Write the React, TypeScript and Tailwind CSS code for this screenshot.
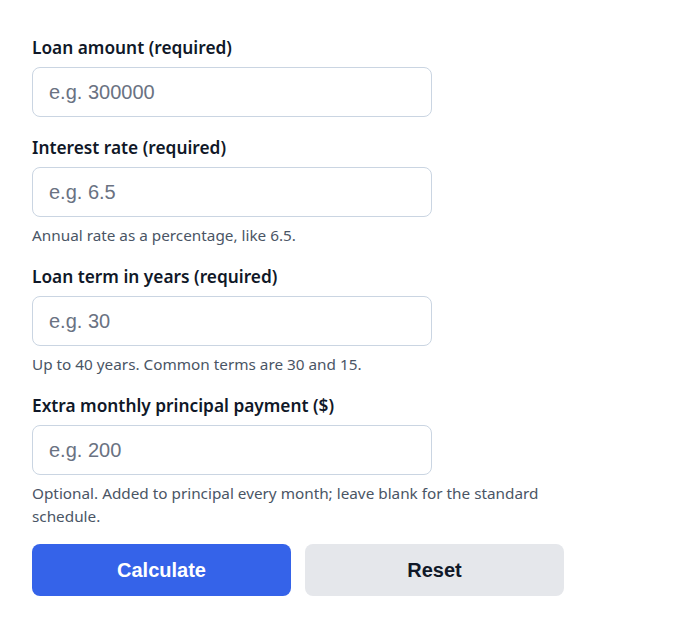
const fields = [
  { label: "Loan amount (required)", placeholder: "e.g. 300000", hint: "" },
  { label: "Interest rate (required)", placeholder: "e.g. 6.5", hint: "Annual rate as a percentage, like 6.5." },
  { label: "Loan term in years (required)", placeholder: "e.g. 30", hint: "Up to 40 years. Common terms are 30 and 15." },
  {
    label: "Extra monthly principal payment ($)",
    placeholder: "e.g. 200",
    hint: "Optional. Added to principal every month; leave blank for the standard schedule.",
  },
];

export default function App() {
  return (
    <div className="min-h-screen bg-white px-8 pt-[35px] font-['Noto_Sans',sans-serif]">
      <form className="flex w-[532px] flex-col" onSubmit={(e) => e.preventDefault()}>
        {fields.map((f, i) => (
          <div key={i} className="mb-[18px] flex flex-col">
            <label className="mb-[7px] text-[17.3px] font-semibold leading-[25px] text-gray-900">{f.label}</label>
            <input
              type="text"
              placeholder={f.placeholder}
              className="h-[50px] w-[400px] rounded-lg border border-slate-300 px-4 font-['Liberation_Sans',sans-serif] text-[20px] text-gray-900 placeholder:text-gray-500 focus:outline-none"
            />
            {f.hint && <p className="mt-[7px] -mb-px text-[15.3px] leading-[23px] text-gray-600">{f.hint}</p>}
          </div>
        ))}
        <div className="-mt-px flex gap-[14px] font-['Liberation_Sans',sans-serif]">
          <button type="submit" className="h-[52px] flex-1 rounded-lg bg-[#3563e9] text-[20px] font-bold text-white">
            Calculate
          </button>
          <button type="button" className="h-[52px] flex-1 rounded-lg bg-gray-200 text-[20px] font-bold text-gray-900">
            Reset
          </button>
        </div>
      </form>
    </div>
  );
}
